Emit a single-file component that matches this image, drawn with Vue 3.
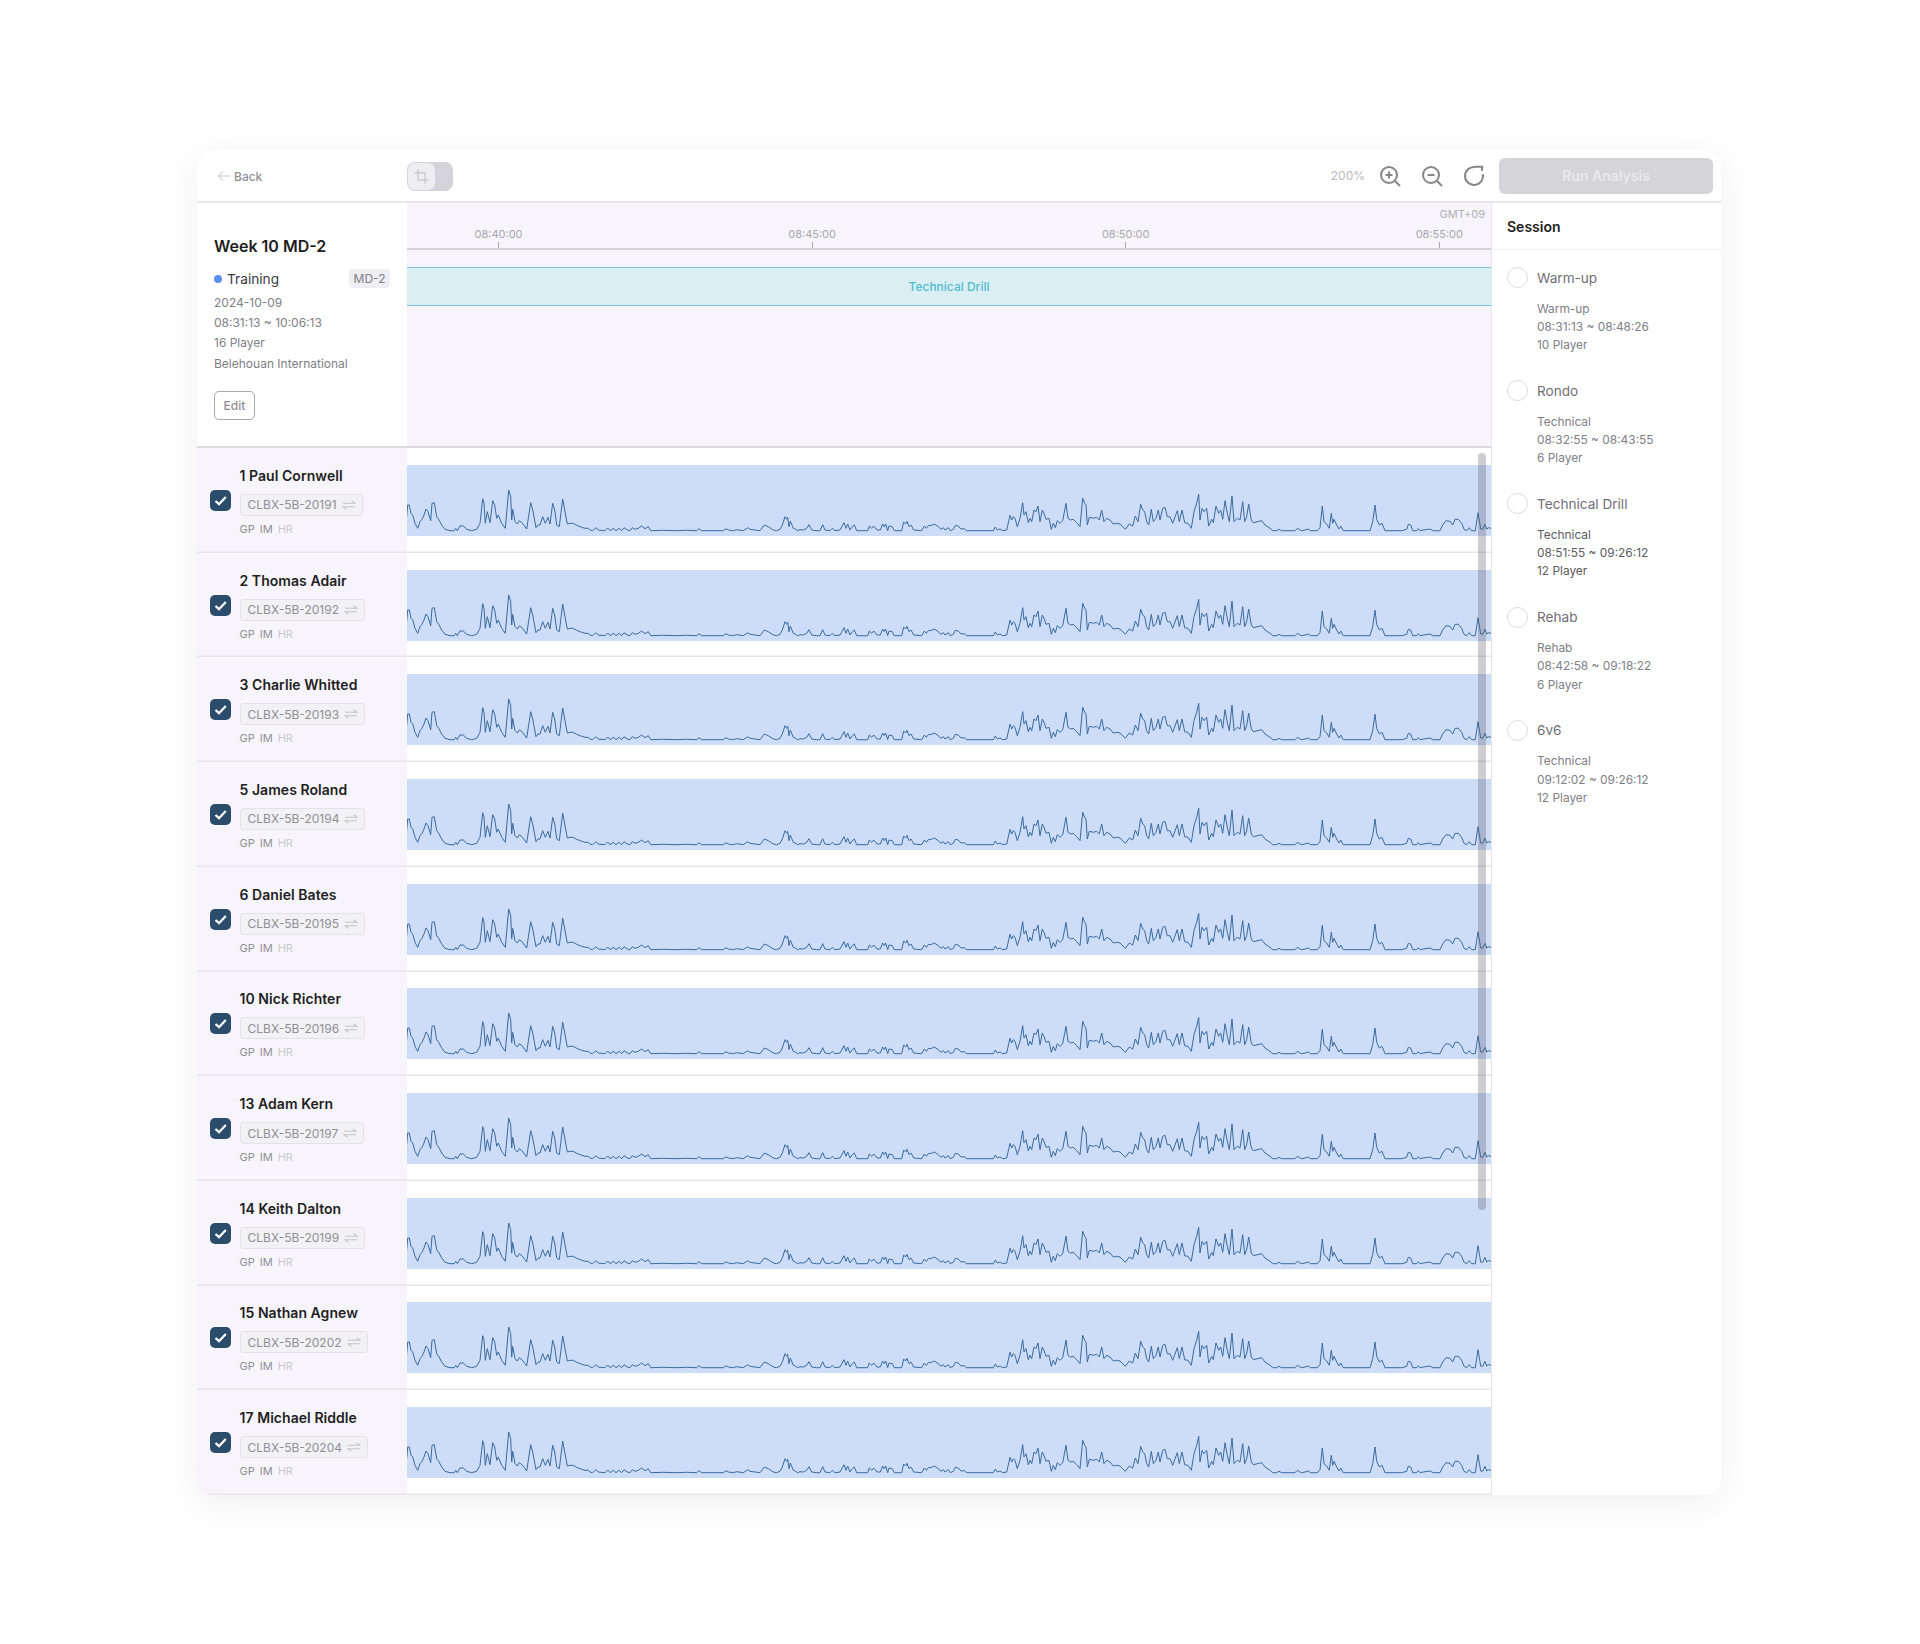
<script setup>
import { computed } from 'vue'

const seg = (x0, pts) => {
  const out = []
  for (let i = 0; i < pts.length; i += 2) {
    out.push([x0 + pts[i] / 3 - 407, (pts[i + 1] - 15) / 3])
  }
  return out
}

const A = [20,170,23,135,28,135,33,160,38,165,45,190,53,205,60,185,66,178,72,165,78,147,84,155,92,182,96,130,103,128,110,170,116,178,125,195,135,208,150,212,163,212,167,205,172,212,180,198,190,198,200,208,215,212,230,208,240,190,248,116,252,130,256,190,262,155,270,188,278,122,284,135,290,175,295,165,305,190,316,205,326,90,332,110,335,180,338,148,345,185,352,192,358,182,366,188,380,207,392,128,398,150,408,203,414,195,420,195,428,170,436,190,444,172,450,192,458,130,464,150,470,195,478,200,488,117,494,150,502,192,510,190,520,190,530,196,545,202,555,205,565,205,570,210,578,212,587,203,595,210,615,212,623,204,630,212,640,205,648,212,658,205,665,212,672,203,682,210,690,212,697,203,705,208,715,205,725,198,735,206,745,200,752,212,790,211,825,212,860,211,890,212,897,206,905,212,970,212,978,206,985,210,1000,212,1010,209,1030,212,1043,203,1050,208,1080,212,1093,195,1105,200,1120,210,1130,212,1140,208]
const B = [15,208,22,195,30,170,35,178,38,172,42,200,46,183,55,205,62,208,68,212,75,209,85,210,95,205,102,194,110,210,125,212,135,212,143,194,150,210,165,212,172,205,180,212,195,210,207,188,213,205,218,192,225,210,232,200,238,195,245,212,278,212,283,198,290,205,296,198,306,210,316,210,323,192,328,200,332,192,338,212,342,198,352,200,358,212,380,212,386,186,392,192,396,184,402,200,408,195,416,210,440,212,448,198,454,205,460,197,470,196,478,192,490,200,498,208,505,203,510,210,520,203,526,212,535,208,541,196,550,198,558,207,568,206,575,212,630,212]
const C = [30,212,40,212,46,201,52,210,60,207,68,212,80,210,90,166,95,180,100,170,105,175,112,200,120,175,128,128,132,165,138,155,145,188,150,175,155,185,162,150,168,155,174,138,180,185,187,150,192,160,198,178,207,175,214,208,220,190,226,203,232,182,240,190,248,182,258,130,264,175,272,180,280,178,290,188,300,200,308,115,314,130,318,135,322,195,328,172,340,175,350,172,358,180,365,150,372,185,380,175,390,180,400,192,410,190,420,192,436,208,448,192,458,198,466,168,474,185,482,133,488,150,494,155,500,185,506,195,514,148,520,185,528,175,535,150,540,180,548,145,555,142,562,170,570,170,578,190,592,152,598,185,606,150,614,188,624,190,634,205,642,155,650,130,656,103,660,180,666,145,672,155,680,145,686,198,695,178,700,188,708,138,716,160,722,150,728,178,735,122,742,160,748,185,756,108,762,185,772,175,780,180,788,125,794,185,800,170,806,132,814,180,820,188,845,182,855,195,870,205,878,212,890,212,897,208,905,212,945,212,952,205,960,210]
const D = [35,212,45,210,55,207,62,212,82,212,90,203,97,138,102,185,110,192,118,205,124,160,128,190,132,178,140,195,147,207,152,198,160,212,240,212,248,185,255,135,260,178,268,195,276,190,285,212,335,212,350,208,355,193,362,195,368,212,380,212,385,206,390,212,400,210,420,207,430,212,450,212,458,195,468,182,480,184,488,195,495,178,505,178,515,190,522,208,530,212,538,203,545,212,556,212,564,158,572,207,578,208,585,193,590,207,595,203,603,205]

const sparkPoints = computed(() =>
  [...seg(400, A), ...seg(775, B), ...seg(980, C), ...seg(1290, D)]
    .map(([x, y]) => `${x.toFixed(1)},${y.toFixed(1)}`)
    .join(' ')
)

const ticks = ['08:40:00', '08:45:00', '08:50:00', '08:55:00'].map((label, i) => ({
  label,
  left: 91.5 + i * 313.6
}))

const players = [
  ['1 Paul Cornwell', 'CLBX-5B-20191'],
  ['2 Thomas Adair', 'CLBX-5B-20192'],
  ['3 Charlie Whitted', 'CLBX-5B-20193'],
  ['5 James Roland', 'CLBX-5B-20194'],
  ['6 Daniel Bates', 'CLBX-5B-20195'],
  ['10 Nick Richter', 'CLBX-5B-20196'],
  ['13 Adam Kern', 'CLBX-5B-20197'],
  ['14 Keith Dalton', 'CLBX-5B-20199'],
  ['15 Nathan Agnew', 'CLBX-5B-20202'],
  ['17 Michael Riddle', 'CLBX-5B-20204']
]

const sessions = [
  { title: 'Warm-up', type: 'Warm-up', time: '08:31:13 ~ 08:48:26', count: '10 Player' },
  { title: 'Rondo', type: 'Technical', time: '08:32:55 ~ 08:43:55', count: '6 Player' },
  { title: 'Technical Drill', type: 'Technical', time: '08:51:55 ~ 09:26:12', count: '12 Player', dark: true },
  { title: 'Rehab', type: 'Rehab', time: '08:42:58 ~ 09:18:22', count: '6 Player' },
  { title: '6v6', type: 'Technical', time: '09:12:02 ~ 09:26:12', count: '12 Player' }
]
</script>

<template>
  <div class="page">
    <div class="card">
      <header class="topbar">
        <div class="back">
          <svg class="back-arrow" viewBox="0 0 14 12" width="14" height="12" fill="none">
            <path d="M13 6H1.5M6 1.5 1.5 6 6 10.5" stroke="#d8d8dc" stroke-width="1.3" />
          </svg>
          <span>Back</span>
        </div>
        <div class="toggle">
          <div class="knob">
            <svg viewBox="0 0 24 24" width="17" height="17" fill="none" stroke="#c4c3ca" stroke-width="1.7">
              <path d="M7 2v15h15M2 7h15v15" />
            </svg>
          </div>
        </div>
        <div class="spacer"></div>
        <span class="zoom-label">200%</span>
        <div class="tools">
          <svg viewBox="0 0 24 24" width="24" height="24" fill="none" stroke="#85858b" stroke-width="2">
            <circle cx="11" cy="11" r="8" />
            <path d="M17 17l5 5M11 7.5v7M7.5 11h7" />
          </svg>
          <svg viewBox="0 0 24 24" width="24" height="24" fill="none" stroke="#85858b" stroke-width="2">
            <circle cx="11" cy="11" r="8" />
            <path d="M17 17l5 5M7.5 11h7" />
          </svg>
          <svg viewBox="0 0 24 24" width="24" height="24" fill="none" stroke="#85858b" stroke-width="2">
            <path d="M13 3.05A9 9 0 1 0 20.85 10.3" />
            <path d="M13 2.8h7.3l-.5 4.2" />
          </svg>
        </div>
        <button class="run">Run Analysis</button>
      </header>

      <div class="main">
        <div class="work">
          <section class="overview">
            <div class="info">
              <h1 class="title">Week 10 MD-2</h1>
              <div class="kind">
                <span class="dot"></span>
                <span class="kind-name">Training</span>
                <span class="md">MD-2</span>
              </div>
              <div class="meta">2024-10-09</div>
              <div class="meta">08:31:13 ~ 10:06:13</div>
              <div class="meta">16 Player</div>
              <div class="meta">Belehouan International</div>
              <button class="edit">Edit</button>
            </div>
            <div class="timeline">
              <div class="ruler">
                <span class="gmt">GMT+09</span>
                <div v-for="t in ticks" :key="t.label" class="tick" :style="{ left: t.left + 'px' }">
                  <span class="tick-label">{{ t.label }}</span>
                  <span class="tick-mark"></span>
                </div>
              </div>
              <div class="drill">Technical Drill</div>
            </div>
          </section>

          <section class="rows">
            <div v-for="p in players" :key="p[1]" class="row">
              <div class="player">
                <span class="check">
                  <svg viewBox="0 0 21 21" width="21" height="21" fill="none">
                    <path d="M5.5 11l3.5 3.2 6.8-7.2" stroke="#fff" stroke-width="2.3" />
                  </svg>
                </span>
                <div class="player-text">
                  <div class="name">{{ p[0] }}</div>
                  <div class="chip">
                    <span>{{ p[1] }}</span>
                    <svg viewBox="0 0 14 10" width="14" height="10" fill="none" stroke="#c4c4c9" stroke-width="1.1">
                      <path d="M1 3.2h12L9.5.6M13 6.8H1l3.5 2.6" />
                    </svg>
                  </div>
                  <div class="signals"><span>GP</span><span>IM</span><span class="off">HR</span></div>
                </div>
              </div>
              <div class="track">
                <svg class="spark" viewBox="0 0 1084 71" preserveAspectRatio="none">
                  <polyline :points="sparkPoints" fill="none" stroke="#3b6b9f" stroke-width="1" />
                </svg>
              </div>
            </div>
            <div class="scrollbar"></div>
          </section>
        </div>

        <aside class="sessions">
          <div class="sessions-head">Session</div>
          <div class="session-list">
            <div v-for="s in sessions" :key="s.title" class="session" :class="{ dark: s.dark }">
              <div class="session-top">
                <span class="radio"></span>
                <span class="session-title">{{ s.title }}</span>
              </div>
              <div class="session-detail">
                <div>{{ s.type }}</div>
                <div>{{ s.time }}</div>
                <div>{{ s.count }}</div>
              </div>
            </div>
          </div>
        </aside>
      </div>
    </div>
  </div>
</template>

<style>
html, body { margin: 0; background: #fff; }
</style>

<style scoped>
.page {
  box-sizing: border-box;
  width: 1920px;
  height: 1644px;
  padding: 150px 199px 149px 197px;
  font-family: Inter, "Noto Sans", sans-serif;
  background: #fff;
}
.card {
  box-sizing: border-box;
  height: 1345px;
  display: flex;
  flex-direction: column;
  border-radius: 16px;
  overflow: hidden;
  background: #fff;
  box-shadow: 0 8px 36px rgba(40, 40, 60, 0.07);
}
.topbar {
  box-sizing: border-box;
  height: 53px;
  flex: none;
  display: flex;
  align-items: center;
  border-bottom: 2px solid #e6e5ea;
}
.back {
  box-sizing: border-box;
  width: 210px;
  margin-top: 1px;
  padding-left: 20px;
  display: flex;
  align-items: center;
  gap: 3px;
  font-size: 12px;
  font-weight: 500;
  color: #8f8f95;
}
.toggle {
  width: 46px;
  height: 29px;
  margin-top: 1px;
  border-radius: 8px;
  background: #d4d3d9;
}
.knob {
  width: 27px;
  height: 27px;
  margin: 1px;
  border-radius: 7px;
  background: #eeedf1;
  display: flex;
  align-items: center;
  justify-content: center;
}
.spacer { flex: 1; }
.zoom-label {
  font-size: 12px;
  color: #b9b9be;
  margin-right: 13px;
}
.tools {
  display: flex;
  gap: 18px;
  margin-right: 13px;
}
.run {
  width: 214px;
  height: 36px;
  margin-right: 8px;
  border: none;
  border-radius: 6px;
  background: #d5d4d9;
  color: #e9e9ed;
  font: 600 14px Inter, "Noto Sans", sans-serif;
}
.main {
  flex: 1;
  min-height: 0;
  display: flex;
}
.work {
  flex: 1;
  min-width: 0;
  display: flex;
  flex-direction: column;
}
.overview {
  box-sizing: border-box;
  height: 245px;
  flex: none;
  display: flex;
  border-bottom: 2px solid #dcdbe0;
}
.info {
  box-sizing: border-box;
  width: 210px;
  flex: none;
  padding: 33px 17px 0;
  background: #fff;
}
.title {
  margin: 0 0 12.5px;
  font-size: 16px;
  line-height: 20px;
  font-weight: 600;
  color: #1d1d20;
}
.kind {
  display: flex;
  align-items: center;
  height: 20px;
  margin-bottom: 4px;
}
.dot {
  width: 8px;
  height: 8px;
  border-radius: 50%;
  background: #5b8fec;
  margin-right: 5px;
}
.kind-name {
  font-size: 13.7px;
  color: #3a3a3f;
  flex: 1;
}
.md {
  padding: 0 4.5px;
  height: 19px;
  line-height: 19px;
  border-radius: 4px;
  background: #efeef2;
  font-size: 12px;
  color: #808086;
}
.meta {
  font-size: 12px;
  line-height: 20.4px;
  color: #808086;
}
.edit {
  display: block;
  width: 41px;
  height: 29px;
  margin-top: 16.5px;
  padding: 0;
  box-sizing: border-box;
  border: 1px solid #a9a9ae;
  border-radius: 5px;
  background: #fff;
  font: 500 12px Inter, "Noto Sans", sans-serif;
  color: #8d8d93;
}
.timeline {
  flex: 1;
  min-width: 0;
  background: #f7f5fb;
}
.ruler {
  position: relative;
  box-sizing: border-box;
  height: 47px;
  border-bottom: 2px solid #d3d2d8;
}
.gmt {
  position: absolute;
  right: 6px;
  top: 4px;
  font-size: 11px;
  line-height: 14px;
  color: #b0b0b5;
}
.tick {
  position: absolute;
  top: 24px;
  width: 0;
  height: 21px;
  display: flex;
  flex-direction: column;
  align-items: center;
}
.tick-label {
  font-size: 11px;
  line-height: 14px;
  white-space: nowrap;
  color: #a6a6ac;
}
.tick-mark {
  margin-top: 1px;
  flex: none;
  width: 1px;
  height: 6px;
  background: #a6a6ac;
}
.drill {
  box-sizing: border-box;
  height: 39px;
  margin-top: 17px;
  border-top: 1px solid #7cc3d3;
  border-bottom: 1px solid #7cc3d3;
  background: #d9eff3;
  text-align: center;
  line-height: 38px;
  font-size: 12px;
  font-weight: 500;
  color: #52bccf;
}
.rows {
  position: relative;
  flex: 1;
  min-height: 0;
  display: flex;
  flex-direction: column;
}
.row {
  flex: 1;
  min-height: 0;
  display: flex;
  box-shadow: inset 0 -1.5px 0 #e6e5ea;
}
.player {
  box-sizing: border-box;
  width: 210px;
  flex: none;
  padding-left: 12.5px;
  display: flex;
  align-items: center;
  gap: 9px;
  background: #f7f5fb;
  box-shadow: inset 0 -1.5px 0 #e6e5ea;
}
.check {
  width: 21px;
  height: 21px;
  flex: none;
  border-radius: 5px;
  background: #2b4c6b;
  display: flex;
}
.player-text {
  min-width: 0;
  padding-top: 2px;
}
.name {
  font-size: 14px;
  line-height: 18px;
  font-weight: 600;
  letter-spacing: 0.05px;
  color: #1f1f23;
  white-space: nowrap;
}
.chip {
  box-sizing: border-box;
  width: fit-content;
  height: 22px;
  margin-top: 9px;
  padding: 0 6px 0 7px;
  display: flex;
  align-items: center;
  gap: 5px;
  border: 1px solid #e3e2e7;
  border-radius: 3px;
  background: #f2f1f5;
  font-size: 12px;
  color: #8f8f95;
  white-space: nowrap;
}
.signals {
  margin-top: 6px;
  display: flex;
  gap: 5px;
  font-size: 11px;
  line-height: 14px;
  color: #8f8f95;
}
.signals .off { color: #c9c9ce; }
.track {
  flex: 1;
  min-width: 0;
  display: flex;
  align-items: center;
}
.spark {
  display: block;
  width: 100%;
  height: 71px;
  background: #cddcf7;
}
.scrollbar {
  position: absolute;
  top: 5px;
  right: 5px;
  width: 8px;
  height: 757px;
  border-radius: 4px;
  background: rgba(90, 90, 105, 0.3);
}
.sessions {
  box-sizing: border-box;
  width: 230px;
  flex: none;
  border-left: 1.5px solid #e6e5ea;
  background: #fff;
}
.sessions-head {
  box-sizing: border-box;
  height: 47px;
  padding-left: 15px;
  line-height: 47px;
  font-size: 14px;
  font-weight: 600;
  color: #1d1d20;
  border-bottom: 1.5px solid #eeedf1;
}
.session-list {
  padding-top: 17px;
  padding-left: 15px;
}
.session {
  height: 113.2px;
}
.session-top {
  display: flex;
  align-items: center;
  height: 21px;
  gap: 9px;
}
.radio {
  box-sizing: border-box;
  width: 21px;
  height: 21px;
  border: 1px solid #dcdcdf;
  border-radius: 50%;
  background: #fff;
}
.session-title {
  font-size: 13.6px;
  color: #6f6f75;
}
.session-detail {
  margin-top: 11.5px;
  padding-left: 30px;
  font-size: 11.9px;
  line-height: 18.3px;
  color: #808086;
}
.session.dark .session-detail { color: #5b5b61; }
</style>
